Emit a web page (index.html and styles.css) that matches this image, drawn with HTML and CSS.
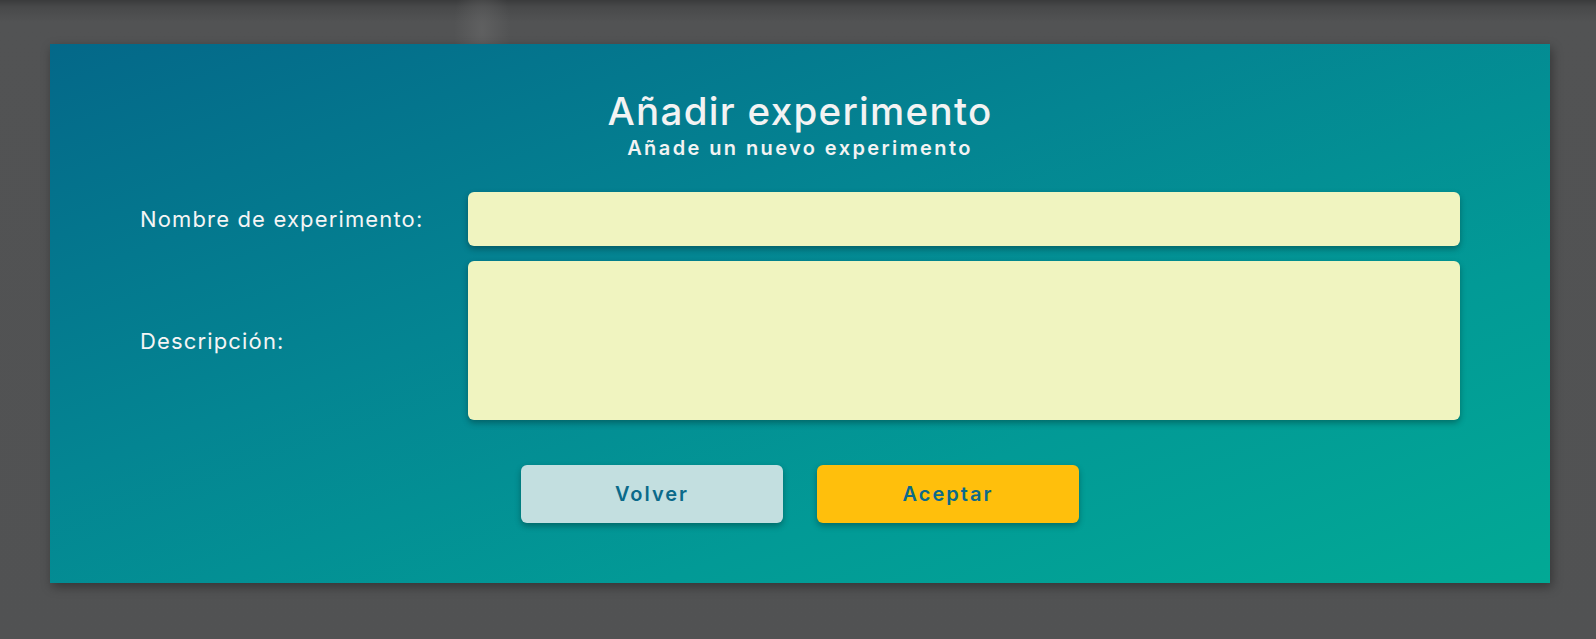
FILE: index.html
```html
<!DOCTYPE html>
<html lang="es">
<head>
<meta charset="utf-8">
<title>Añadir experimento</title>
<link rel="stylesheet" href="styles.css">
</head>
<body>
<div class="page">
  <section class="card">
    <header class="head">
      <h1 class="title">Añadir experimento</h1>
      <p class="subtitle">Añade un nuevo experimento</p>
    </header>
    <form class="form">
      <label class="label" for="nombre">Nombre de experimento:</label>
      <input class="field" id="nombre" type="text">
      <label class="label" for="desc">Descripción:</label>
      <textarea class="field area" id="desc"></textarea>
    </form>
    <div class="actions">
      <button class="btn btn-back" type="button">Volver</button>
      <button class="btn btn-ok" type="button">Aceptar</button>
    </div>
  </section>
</div>
</body>
</html>
```

FILE: styles.css
```css
* { box-sizing: border-box; }
html, body { margin: 0; padding: 0; }
body {
  width: 1596px;
  height: 639px;
  overflow: hidden;
  background:
    radial-gradient(ellipse 28px 70px at 482px 30px, rgba(120,120,120,0.35), rgba(120,120,120,0) 100%),
    linear-gradient(180deg, #3a3b3c 0px, #48494a 7px, #525354 22px, #515253 100%);
  font-family: "Inter", "Open Sans", sans-serif;
}
.page {
  padding: 44px 46px 0 50px;
}
.card {
  width: 1500px;
  height: 539px;
  background: linear-gradient(160deg, #046889 0%, #048592 40%, #029a96 70%, #02a995 100%);
  box-shadow: 2px 4px 10px rgba(0,0,0,0.35);
  display: flex;
  flex-direction: column;
  padding: 43px 90px 0 90px;
}
.head {
  text-align: center;
  color: #f3f3f3;
}
.title {
  margin: 0;
  font-size: 38.5px;
  font-weight: 500;
  line-height: 48px;
  letter-spacing: 1.3px;
}
.subtitle {
  margin: 1px 0 0;
  font-size: 20px;
  font-weight: 600;
  line-height: 24px;
  letter-spacing: 2.4px;
}
.form {
  margin-top: 32px;
  display: grid;
  grid-template-columns: 328px 1fr;
  row-gap: 15px;
  align-items: center;
}
.label {
  color: #f5f5f5;
  font-size: 22px;
  font-weight: 400;
  letter-spacing: 1.15px;
}
.field {
  display: block;
  width: 100%;
  height: 54px;
  border: none;
  border-radius: 6px;
  background: #f0f4c0;
  box-shadow: 0 3px 6px rgba(0,0,0,0.3);
  outline: none;
  font: inherit;
  padding: 8px 12px;
}
.area {
  height: 159px;
  resize: none;
}
.actions {
  margin-top: 45px;
  display: flex;
  justify-content: center;
  gap: 34px;
}
.btn {
  width: 262px;
  height: 58px;
  border: none;
  border-radius: 6px;
  font-family: inherit;
  font-size: 20px;
  font-weight: 600;
  color: #0b6a8a;
  box-shadow: 0 3px 6px rgba(0,0,0,0.3);
  cursor: pointer;
  letter-spacing: 2px;
  padding: 0;
}
.btn-back { background: #c3dfe0; }
.btn-ok { background: #ffbf0c; }
```
